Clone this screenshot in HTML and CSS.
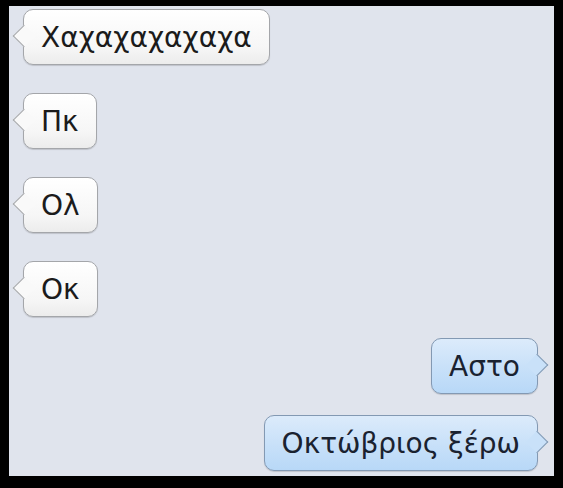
FILE: index.html
```html
<!DOCTYPE html>
<html lang="el">
<head>
    <meta charset="UTF-8">
    <meta name="viewport" content="width=device-width, initial-scale=1.0">
    <title>Μηνύματα</title>
    <link rel="stylesheet" href="styles.css">
</head>
<body>
    <div class="screen">
        <div class="thread">
            <div class="msg in first">Χαχαχαχαχαχα</div>
            <div class="msg in">Πκ</div>
            <div class="msg in">Ολ</div>
            <div class="msg in">Οκ</div>
            <div class="msg out gap-small">Αστο</div>
            <div class="msg out gap-small">Οκτώβριος ξέρω</div>
        </div>
    </div>
</body>
</html>
```

FILE: styles.css
```css
html, body {
    margin: 0;
    background: #000;
}
body {
    padding: 6px 9px 12px 9px;
    width: 545px;
}
.screen {
    background-color: #e0e4ed;
    height: 470px;
    overflow: hidden;
}
.thread {
    display: flex;
    flex-direction: column;
    padding: 3px 16px 0 14px;
    font-family: 'DejaVu Sans', 'Liberation Sans', sans-serif;
}
.msg {
    position: relative;
    box-sizing: border-box;
    height: 56px;
    padding: 0 17px;
    display: flex;
    align-items: center;
    font-size: 28px;
    color: #1b1b1b;
    border-radius: 10px;
    margin-top: 28px;
}
.msg.first {
    margin-top: 0;
}
.msg.gap-small {
    margin-top: 21px;
}
.msg::before {
    content: '';
    position: absolute;
    top: 50%;
    width: 15px;
    height: 15px;
    margin-top: -9px;
    transform: rotate(45deg);
}
.in {
    align-self: flex-start;
    background: linear-gradient(#ffffff, #f6f6f6 70%, #ececec);
    border: 1px solid #a4a6aa;
    box-shadow: 0 1px 1px rgba(0, 0, 0, 0.15);
}
.in::before {
    left: -8px;
    background: #f9f9f9;
    border-left: 1px solid #a4a6aa;
    border-bottom: 1px solid #a4a6aa;
}
.out {
    align-self: flex-end;
    color: #1a2230;
    background: linear-gradient(#dcebfb, #c9e1f9 50%, #b8d8f7);
    border: 1px solid #8399b3;
    box-shadow: 0 1px 1px rgba(0, 0, 0, 0.15);
}
.out::before {
    right: -8px;
    background: #c9e1f9;
    border-right: 1px solid #8399b3;
    border-top: 1px solid #8399b3;
}
```
